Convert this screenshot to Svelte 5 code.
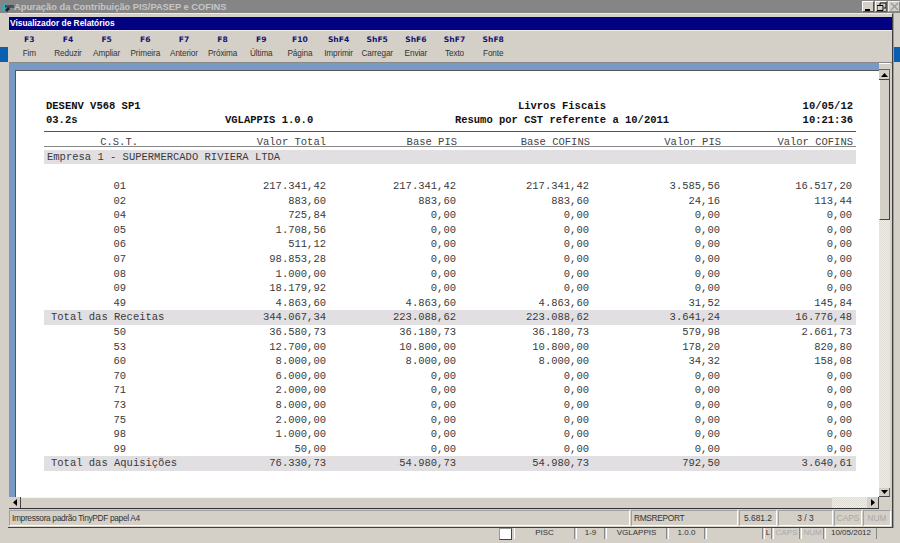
<script>
  const keys = [
    ['F3','Fim'],['F4','Reduzir'],['F5','Ampliar'],['F6','Primeira'],['F7','Anterior'],['F8','Próxima'],['F9','Última'],
    ['F10','Página'],['ShF4','Imprimir'],['ShF5','Carregar'],['ShF6','Enviar'],['ShF7','Texto'],['ShF8','Fonte']
  ];
  const heads = ['C.S.T.','Valor Total','Base PIS','Base COFINS','Valor PIS','Valor COFINS'];
  const rows = [
    ['01','217.341,42','217.341,42','217.341,42','3.585,56','16.517,20'],
    ['02','883,60','883,60','883,60','24,16','113,44'],
    ['04','725,84','0,00','0,00','0,00','0,00'],
    ['05','1.708,56','0,00','0,00','0,00','0,00'],
    ['06','511,12','0,00','0,00','0,00','0,00'],
    ['07','98.853,28','0,00','0,00','0,00','0,00'],
    ['08','1.000,00','0,00','0,00','0,00','0,00'],
    ['09','18.179,92','0,00','0,00','0,00','0,00'],
    ['49','4.863,60','4.863,60','4.863,60','31,52','145,84'],
    ['Total das Receitas','344.067,34','223.088,62','223.088,62','3.641,24','16.776,48'],
    ['50','36.580,73','36.180,73','36.180,73','579,98','2.661,73'],
    ['53','12.700,00','10.800,00','10.800,00','178,20','820,80'],
    ['60','8.000,00','8.000,00','8.000,00','34,32','158,08'],
    ['70','6.000,00','0,00','0,00','0,00','0,00'],
    ['71','2.000,00','0,00','0,00','0,00','0,00'],
    ['73','8.000,00','0,00','0,00','0,00','0,00'],
    ['75','2.000,00','0,00','0,00','0,00','0,00'],
    ['98','1.000,00','0,00','0,00','0,00','0,00'],
    ['99','50,00','0,00','0,00','0,00','0,00'],
    ['Total das Aquisições','76.330,73','54.980,73','54.980,73','792,50','3.640,61']
  ];
</script>

<div class="root">
  <header class="apptitle">
    <svg class="appicon" width="13" height="12" viewBox="0 0 13 12">
      <path d="M1 8 L5 2 L7 4 L3 10 Z" fill="#1fb6c9"/>
      <path d="M5 9 L8 6 L10 8 L7 11 Z" fill="#123"/>
    </svg>
    <span class="rms">RMS</span>
    <span class="apptext">Apuração da Contribuição PIS/PASEP e COFINS</span>
    <div class="controls">
      <button class="ctl" aria-label="Minimizar"><svg width="9" height="9" viewBox="0 0 9 9"><rect x="1" y="7" width="5" height="2" fill="#000"/></svg></button>
      <button class="ctl" aria-label="Restaurar"><svg width="9" height="9" viewBox="0 0 9 9"><path d="M3 1h6v5H7M3 1v2M0 3.5h6v5H0z" fill="none" stroke="#000"/></svg></button>
      <button class="ctl off" aria-label="Fechar"><svg width="9" height="9" viewBox="0 0 9 9"><path d="M1 1l7 7M8 1L1 8" stroke="#999" stroke-width="1.4"/></svg></button>
    </div>
  </header>

  <div class="middle">
    <div class="gutter left"><span class="patch"></span></div>
    <main class="window">
      <div class="wintitle">Visualizador de Relatórios</div>
      <nav class="toolbar">
        {#each keys as k}
          <div class="tool"><b>{k[0]}</b><span>{k[1]}</span></div>
        {/each}
      </nav>
      <div class="viewer">
        <div class="canvas">
          <div class="page">
            <div class="meta">
              <span class="span2">DESENV V568 SP1</span>
              <span class="mid">Livros Fiscais</span>
              <span class="end">10/05/12</span>
              <span>03.2s</span>
              <span>VGLAPPIS 1.0.0</span>
              <span class="mid">Resumo por CST referente a 10/2011</span>
              <span class="end">10:21:36</span>
            </div>
            <div class="rule"></div>
            <div class="heads">
              {#each heads as h}<span>{h}</span>{/each}
            </div>
            <div class="band company">Empresa 1 - SUPERMERCADO RIVIERA LTDA</div>
            <div class="data">
              {#each rows as r}
                <div class="row" class:total={r[0].length > 2}>
                  {#each r as c}<span>{c}</span>{/each}
                </div>
              {/each}
            </div>
          </div>
        </div>
        <div class="vscroll">
          <div class="vcap"></div>
          <div class="arrow up"><svg width="7" height="4" viewBox="0 0 7 4"><path d="M3.5 0L7 4H0z"/></svg></div>
          <div class="vthumb"></div>
          <div class="track"></div>
          <div class="arrow down"><svg width="7" height="4" viewBox="0 0 7 4"><path d="M0 0h7L3.500 4z"/></svg></div>
        </div>
      </div>
      <div class="hscroll">
        <div class="harrow"><svg width="4" height="7" viewBox="0 0 4 7"><path d="M4 0v7L0 3.500z"/></svg></div>
        <div class="hthumb"></div>
        <div class="track"></div>
        <div class="harrow"><svg width="4" height="7" viewBox="0 0 4 7"><path d="M0 0v7l4-3.500z"/></svg></div>
      </div>
      <footer class="status">
        <div class="cell msg">Impressora padrão TinyPDF papel A4</div>
        <div class="cell rep">RMSREPORT</div>
        <div class="cell ver">5.681.2</div>
        <div class="cell pg">3 / 3</div>
        <div class="cell caps dim">CAPS</div>
        <div class="cell num dim">NUM</div>
      </footer>
    </main>
    <div class="gutter right"><span class="patch"></span></div>
  </div>

  <div class="outer">
    <div class="check"></div>
    <div class="ocell" style="width:61px">PISC</div>
    <div class="ocell" style="width:29px">1-9</div>
    <div class="ocell" style="width:61px">VGLAPPIS</div>
    <div class="ocell" style="width:37px">1.0.0</div>
    <div class="ocell" style="width:57px"></div>
    <div class="ocell" style="width:8px">L</div>
    <div class="ocell dim" style="width:27px">CAPS</div>
    <div class="ocell dim" style="width:23px">NUM</div>
    <div class="ocell" style="width:52px">10/05/2012</div>
  </div>
</div>

<style>
  :global(body) { margin: 0; background: #d4d0c8; }
  .root {
    width: 900px; height: 543px; overflow: hidden; display: flex; flex-direction: column;
    background: #d4d0c8; font-family: "Liberation Sans", Arial, sans-serif; color: #222;
  }
  .apptitle {
    height: 13px; flex: none; background: #858585; display: flex; align-items: center;
    position: relative;
  }
  .appicon { flex: none; margin-left: 0; }
  .rms { position: absolute; left: 5px; top: 4px; font: bold 4px "Liberation Sans", sans-serif; color: #123; }
  .apptext {
    margin-left: 1px; font: bold 9.300px "Liberation Sans", sans-serif; color: #c6c6c6; white-space: nowrap;
  }
  .controls { margin-left: auto; display: flex; gap: 1px; padding-right: 0; }
  .ctl {
    width: 12px; height: 11px; padding: 0; border: 1px solid; border-color: #fff #555 #555 #fff;
    background: #d4d0c8; display: flex; align-items: center; justify-content: center;
  }
  .ctl.off { border-color: #eee #888 #888 #eee; }

  .middle { flex: 1; display: flex; min-height: 0; }
  .gutter { width: 8px; flex: none; }
  .gutter.right { width: 7px; border-left: 1px solid #9a9a9a; box-sizing: border-box; }
  .patch { display: block; height: 15px; margin-top: 34px; background: #0a5fb0; }
  .window {
    flex: 1; min-width: 0; display: flex; flex-direction: column; box-sizing: border-box;
    background: #d4d0c8; border-right: 1px solid #404040; border-bottom: 1px solid #404040;
    padding: 3px 0 0 1px; border-top: 1px solid #eeece6;
  }
  .wintitle {
    height: 13px; flex: none; background: #000080; color: #fff; font: bold 8.400px/13px "Liberation Sans", sans-serif;
    padding-left: 1px; margin-right: 0;
  }
  .toolbar {
    flex: none; display: flex; padding: 1px 0 0 1px; border-top: 1px solid #f0eee8;
    border-bottom: 1px solid #888; box-sizing: content-box; height: 30px;
  }
  .tool { width: 38.670px; flex: none; display: flex; flex-direction: column; align-items: center; }
  .tool b { font: bold 7.600px/10px "DejaVu Sans", sans-serif; color: #14146e; margin-top: 3px; }
  .tool span { font: 8.200px/10px "Liberation Sans", sans-serif; color: #333; margin-top: 4px; letter-spacing: -0.1px; }

  .viewer { flex: 1; min-height: 0; display: flex; padding-right: 2px; }
  .canvas {
    flex: 1; min-width: 0; background: #7a9ac6; padding: 7px 0 0 6px; box-sizing: border-box;
  }
  .page {
    height: 100%; background: #fff; box-sizing: border-box; border-top: 1px solid #555; border-left: 1px solid #555;
    padding: 28px 0 0 28px; font-family: "Liberation Mono", "Courier New", monospace;
    font-size: 10.500px; color: #3a3a3a; overflow: hidden;
  }
  .meta {
    display: grid; grid-template-columns: 179px 179px 316px 1fr; width: 807px; margin-left: 2px;
    font-weight: bold; color: #111; line-height: 14px; white-space: pre;
  }
  .span2 { grid-column: span 2; }
  .mid { text-align: center; }
  .end { text-align: right; }
  .rule { width: 812px; height: 1px; background: #555; margin-top: 4px; }
  .heads, .row {
    display: grid; grid-template-columns: 82px 200px 130px 133px 131px 132px; width: 812px; white-space: nowrap;
  }
  .heads {
    grid-template-columns: 94px 188px 131px 133px 131px 132px; height: 14px; line-height: 20px;
    border-bottom: 1px solid #888; color: #444;
  }
  .heads span, .row span { text-align: right; }
  .band { background: #e2dfe3; }
  .company { margin-top: 3px; height: 14px; line-height: 14px; padding-left: 3px; width: 809px; }
  .data { margin-top: 15px; }
  .row { height: 14.600px; line-height: 14.600px; }
  .row.total { background: #e2dfe3; }
  .row.total span:first-child { text-align: left; padding-left: 7px; overflow: visible; }

  .vscroll { width: 11px; flex: none; display: flex; flex-direction: column; border-top: 1px solid #fff; box-sizing: border-box; }
  .vcap { height: 5px; background: #d4d0c8; border-bottom: 1px solid #666; }
  .arrow {
    height: 9px; flex: none; display: flex; align-items: center; justify-content: center;
    background: #d4d0c8; border-bottom: 1px solid #444; border-right: 1px solid #666;
  }
  .arrow.down { height: 8px; }
  .vthumb { height: 139px; flex: none; background: #d4d0c8; border-right: 1px solid #444; border-bottom: 1px solid #444; border-left: 1px solid #fff; }
  .track {
    flex: 1; min-width: 0; min-height: 0;
    background: repeating-conic-gradient(#dedbd4 0 25%, #efeeea 0 50%) 0 0 / 2px 2px;
  }
  .hscroll { height: 12px; flex: none; display: flex; margin-right: 13px; border-bottom: 1px solid #333; box-sizing: border-box; }
  .harrow {
    width: 10px; flex: none; margin-left: 1px; display: flex; align-items: center; justify-content: center;
    background: #d4d0c8; border-right: 1px solid #444;
  }
  .hthumb { width: 811px; flex: none; background: #d4d0c8; border-top: 1px solid #f5f4f0; }

  .status { height: 18px; flex: none; display: flex; gap: 1px; padding: 1px 1px 1px 0; box-sizing: border-box; }
  .cell {
    box-sizing: border-box; border: 1px solid; border-color: #a0a0a0 #fff #fff #a0a0a0;
    font-size: 8.400px; line-height: 14px; color: #333; padding-left: 2px; white-space: nowrap;
  }
  .msg { flex: 1; letter-spacing: -0.350px; }
  .rep { width: 107px; letter-spacing: -0.350px; }
  .ver { width: 38px; text-align: center; padding: 0; }
  .pg { width: 55px; text-align: center; padding: 0; }
  .caps { width: 28px; text-align: center; padding: 0; }
  .num { width: 28px; text-align: center; padding: 0; }
  .dim { color: #a8a8a8; }

  .outer { height: 15px; flex: none; display: flex; align-items: flex-start; padding-left: 499px; }
  .check {
    width: 13px; height: 12px; background: #fff; box-sizing: border-box; margin-right: 2px;
    border: 1px solid; border-color: #999 #444 #444 #999;
  }
  .ocell {
    box-sizing: border-box; height: 11px; font-size: 8px; line-height: 9px; text-align: center; color: #333;
    border-right: 1px solid #888; border-left: 1px solid #fff; margin-right: 1px; white-space: nowrap;
  }
  .ocell.dim { color: #a8a8a8; }
</style>
